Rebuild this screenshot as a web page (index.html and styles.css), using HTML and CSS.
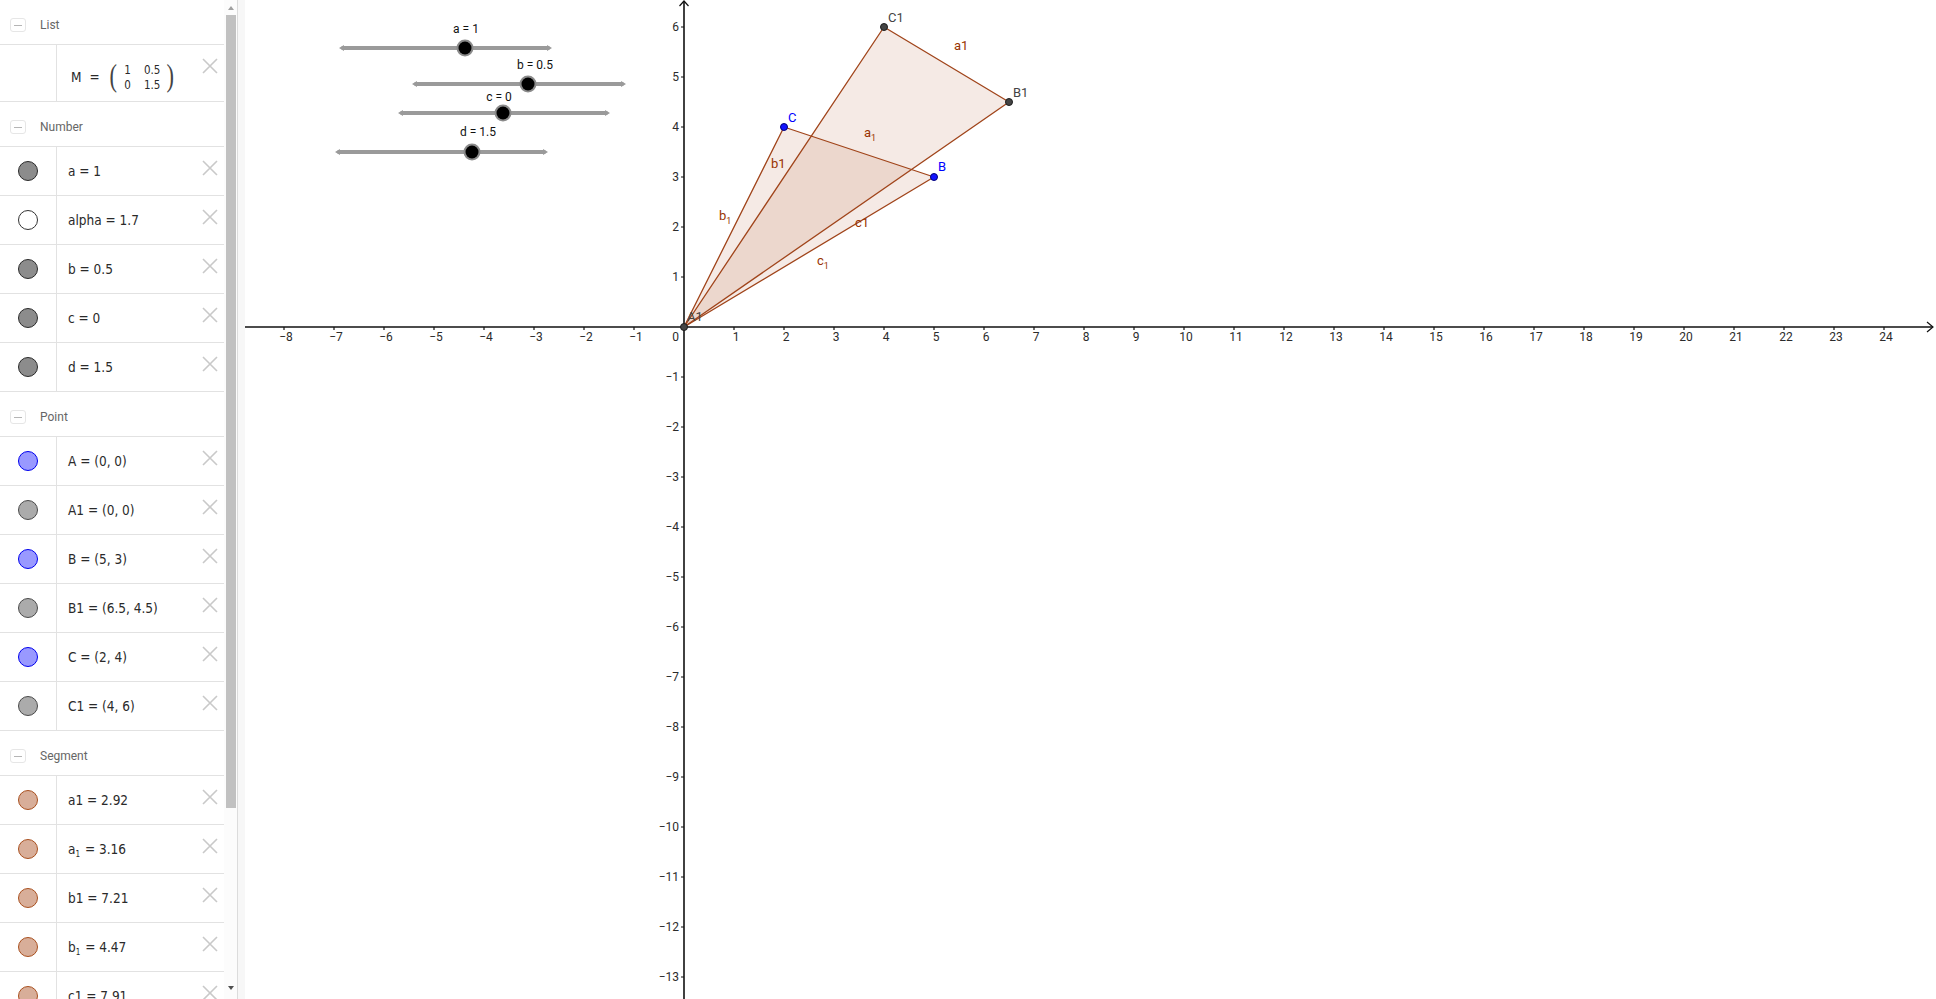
FILE: index.html
```html
<!DOCTYPE html>
<html>
<head>
<meta charset="utf-8">
<title>GeoGebra</title>
<link rel="stylesheet" href="styles.css">
</head>
<body>
<div class="app">
  <aside class="algebra">
    <div class="head"><span class="toggle"></span><span class="head-title">List</span></div>
    <div class="row row-matrix">
      <div class="marble-cell"></div>
      <div class="val matrix"><span class="mname">M</span><span class="eq">=</span><span class="paren">(</span><span class="mgrid"><span>1</span><span>0.5</span><span>0</span><span>1.5</span></span><span class="paren">)</span></div>
      <span class="del"><svg viewBox="0 0 16 16"><path d="M1 1L15 15M15 1L1 15"/></svg></span>
    </div>

    <div class="head"><span class="toggle"></span><span class="head-title">Number</span></div>
    <div class="row"><div class="marble-cell"><span class="marble num"></span></div><div class="val"><span class="txt">a = 1</span></div><span class="del"><svg viewBox="0 0 16 16"><path d="M1 1L15 15M15 1L1 15"/></svg></span></div>
    <div class="row"><div class="marble-cell"><span class="marble hollow"></span></div><div class="val"><span class="txt">alpha = 1.7</span></div><span class="del"><svg viewBox="0 0 16 16"><path d="M1 1L15 15M15 1L1 15"/></svg></span></div>
    <div class="row"><div class="marble-cell"><span class="marble num"></span></div><div class="val"><span class="txt">b = 0.5</span></div><span class="del"><svg viewBox="0 0 16 16"><path d="M1 1L15 15M15 1L1 15"/></svg></span></div>
    <div class="row"><div class="marble-cell"><span class="marble num"></span></div><div class="val"><span class="txt">c = 0</span></div><span class="del"><svg viewBox="0 0 16 16"><path d="M1 1L15 15M15 1L1 15"/></svg></span></div>
    <div class="row"><div class="marble-cell"><span class="marble num"></span></div><div class="val"><span class="txt">d = 1.5</span></div><span class="del"><svg viewBox="0 0 16 16"><path d="M1 1L15 15M15 1L1 15"/></svg></span></div>

    <div class="head"><span class="toggle"></span><span class="head-title">Point</span></div>
    <div class="row"><div class="marble-cell"><span class="marble blue"></span></div><div class="val"><span class="txt">A = (0, 0)</span></div><span class="del"><svg viewBox="0 0 16 16"><path d="M1 1L15 15M15 1L1 15"/></svg></span></div>
    <div class="row"><div class="marble-cell"><span class="marble gray"></span></div><div class="val"><span class="txt">A1 = (0, 0)</span></div><span class="del"><svg viewBox="0 0 16 16"><path d="M1 1L15 15M15 1L1 15"/></svg></span></div>
    <div class="row"><div class="marble-cell"><span class="marble blue"></span></div><div class="val"><span class="txt">B = (5, 3)</span></div><span class="del"><svg viewBox="0 0 16 16"><path d="M1 1L15 15M15 1L1 15"/></svg></span></div>
    <div class="row"><div class="marble-cell"><span class="marble gray"></span></div><div class="val"><span class="txt">B1 = (6.5, 4.5)</span></div><span class="del"><svg viewBox="0 0 16 16"><path d="M1 1L15 15M15 1L1 15"/></svg></span></div>
    <div class="row"><div class="marble-cell"><span class="marble blue"></span></div><div class="val"><span class="txt">C = (2, 4)</span></div><span class="del"><svg viewBox="0 0 16 16"><path d="M1 1L15 15M15 1L1 15"/></svg></span></div>
    <div class="row"><div class="marble-cell"><span class="marble gray"></span></div><div class="val"><span class="txt">C1 = (4, 6)</span></div><span class="del"><svg viewBox="0 0 16 16"><path d="M1 1L15 15M15 1L1 15"/></svg></span></div>

    <div class="head"><span class="toggle"></span><span class="head-title">Segment</span></div>
    <div class="row"><div class="marble-cell"><span class="marble seg"></span></div><div class="val"><span class="txt">a1 = 2.92</span></div><span class="del"><svg viewBox="0 0 16 16"><path d="M1 1L15 15M15 1L1 15"/></svg></span></div>
    <div class="row"><div class="marble-cell"><span class="marble seg"></span></div><div class="val"><span class="txt">a<sub>1</sub> = 3.16</span></div><span class="del"><svg viewBox="0 0 16 16"><path d="M1 1L15 15M15 1L1 15"/></svg></span></div>
    <div class="row"><div class="marble-cell"><span class="marble seg"></span></div><div class="val"><span class="txt">b1 = 7.21</span></div><span class="del"><svg viewBox="0 0 16 16"><path d="M1 1L15 15M15 1L1 15"/></svg></span></div>
    <div class="row"><div class="marble-cell"><span class="marble seg"></span></div><div class="val"><span class="txt">b<sub>1</sub> = 4.47</span></div><span class="del"><svg viewBox="0 0 16 16"><path d="M1 1L15 15M15 1L1 15"/></svg></span></div>
    <div class="row"><div class="marble-cell"><span class="marble seg"></span></div><div class="val"><span class="txt">c1 = 7.91</span></div><span class="del"><svg viewBox="0 0 16 16"><path d="M1 1L15 15M15 1L1 15"/></svg></span></div>
  </aside>

  <div class="scrollbar"><span class="arrow up"></span><span class="thumb"></span><span class="arrow down"></span></div>
  <div class="splitter"></div>

  <main class="graphics">
    <svg class="canvas" width="1691" height="999" viewBox="245 0 1691 999">
      <polygon class="poly" points="684,327 934,177 784,127"/>
      <polygon class="poly" points="684,327 1009,102 884,27"/>

      <line class="axis" x1="245" y1="327" x2="1933" y2="327"/>
      <line class="axis" x1="684" y1="1" x2="684" y2="999"/>
      <path class="arrowhead" d="M1927 322L1933 327L1927 332"/>
      <path class="arrowhead" d="M679.5 6L684 1L688.5 6"/>
      <path class="ticks" d="M284 327v3M334 327v3M384 327v3M434 327v3M484 327v3M534 327v3M584 327v3M634 327v3M734 327v3M784 327v3M834 327v3M884 327v3M934 327v3M984 327v3M1034 327v3M1084 327v3M1134 327v3M1184 327v3M1234 327v3M1284 327v3M1334 327v3M1384 327v3M1434 327v3M1484 327v3M1534 327v3M1584 327v3M1634 327v3M1684 327v3M1734 327v3M1784 327v3M1834 327v3M1884 327v3M681 27h3M681 77h3M681 127h3M681 177h3M681 227h3M681 277h3M681 377h3M681 427h3M681 477h3M681 527h3M681 577h3M681 627h3M681 677h3M681 727h3M681 777h3M681 827h3M681 877h3M681 927h3M681 977h3"/>

      <g class="xlabels">
        <text x="286" y="341">−8</text><text x="336" y="341">−7</text><text x="386" y="341">−6</text><text x="436" y="341">−5</text>
        <text x="486" y="341">−4</text><text x="536" y="341">−3</text><text x="586" y="341">−2</text><text x="636" y="341">−1</text>
        <text x="736" y="341">1</text><text x="786" y="341">2</text><text x="836" y="341">3</text><text x="886" y="341">4</text>
        <text x="936" y="341">5</text><text x="986" y="341">6</text><text x="1036" y="341">7</text><text x="1086" y="341">8</text>
        <text x="1136" y="341">9</text><text x="1186" y="341">10</text><text x="1236" y="341">11</text><text x="1286" y="341">12</text>
        <text x="1336" y="341">13</text><text x="1386" y="341">14</text><text x="1436" y="341">15</text><text x="1486" y="341">16</text>
        <text x="1536" y="341">17</text><text x="1586" y="341">18</text><text x="1636" y="341">19</text><text x="1686" y="341">20</text>
        <text x="1736" y="341">21</text><text x="1786" y="341">22</text><text x="1836" y="341">23</text><text x="1886" y="341">24</text>
      </g>
      <g class="ylabels">
        <text x="679" y="31">6</text><text x="679" y="81">5</text><text x="679" y="131">4</text><text x="679" y="181">3</text>
        <text x="679" y="231">2</text><text x="679" y="281">1</text><text x="679" y="341">0</text>
        <text x="679" y="381">−1</text><text x="679" y="431">−2</text><text x="679" y="481">−3</text><text x="679" y="531">−4</text>
        <text x="679" y="581">−5</text><text x="679" y="631">−6</text><text x="679" y="681">−7</text><text x="679" y="731">−8</text>
        <text x="679" y="781">−9</text><text x="679" y="831">−10</text><text x="679" y="881">−11</text><text x="679" y="931">−12</text>
        <text x="679" y="981">−13</text>
      </g>

      <polygon class="seg" points="684,327 934,177 784,127"/>
      <polygon class="seg" points="684,327 1009,102 884,27"/>

      <g class="seglabel">
        <text x="954" y="50">a1</text>
        <text x="864" y="137">a<tspan class="sub" dy="4">1</tspan></text>
        <text x="771" y="168">b1</text>
        <text x="719" y="220">b<tspan class="sub" dy="4">1</tspan></text>
        <text x="855" y="227">c1</text>
        <text x="817" y="265">c<tspan class="sub" dy="4">1</tspan></text>
      </g>

      <circle class="pt dark" cx="684" cy="327" r="3.5"/>
      <circle class="pt dark" cx="884" cy="27" r="3.5"/>
      <circle class="pt dark" cx="1009" cy="102" r="3.5"/>
      <circle class="pt bluept" cx="784" cy="127" r="3.5"/>
      <circle class="pt bluept" cx="934" cy="177" r="3.5"/>

      <g class="ptlabel">
        <text class="dk" x="888" y="22">C1</text>
        <text class="dk" x="1013" y="97">B1</text>
        <text class="dk" x="687" y="321">A1</text>
        <text class="bl" x="788" y="122">C</text>
        <text class="bl" x="938" y="171">B</text>
      </g>

      <g class="slider">
        <line x1="343" y1="48" x2="548" y2="48"/>
        <path class="tip" d="M339 48l5-3v6zM552 48l-5-3v6z"/>
        <circle class="halo" cx="465" cy="48" r="8.5"/><circle class="knob" cx="465" cy="48" r="6.5"/>
        <text x="466" y="33">a = 1</text>
      </g>
      <g class="slider">
        <line x1="416" y1="84" x2="622" y2="84"/>
        <path class="tip" d="M412 84l5-3v6zM626 84l-5-3v6z"/>
        <circle class="halo" cx="528" cy="84" r="8.5"/><circle class="knob" cx="528" cy="84" r="6.5"/>
        <text x="535" y="69">b = 0.5</text>
      </g>
      <g class="slider">
        <line x1="402" y1="113" x2="606" y2="113"/>
        <path class="tip" d="M398 113l5-3v6zM610 113l-5-3v6z"/>
        <circle class="halo" cx="503" cy="113" r="8.5"/><circle class="knob" cx="503" cy="113" r="6.5"/>
        <text x="499" y="101">c = 0</text>
      </g>
      <g class="slider">
        <line x1="339" y1="152" x2="544" y2="152"/>
        <path class="tip" d="M335 152l5-3v6zM548 152l-5-3v6z"/>
        <circle class="halo" cx="472" cy="152" r="8.5"/><circle class="knob" cx="472" cy="152" r="6.5"/>
        <text x="478" y="136">d = 1.5</text>
      </g>
    </svg>
  </main>
</div>
</body>
</html>
```

FILE: styles.css
```css
html, body {
  margin: 0;
  padding: 0;
  background: #fff;
  overflow: hidden;
}
body {
  font-family: Roboto, "Liberation Sans", sans-serif;
  color: #333;
}
.app {
  display: flex;
  width: 1936px;
  height: 999px;
}

/* Algebra view */
.algebra {
  width: 224px;
  flex: none;
  height: 999px;
  overflow: hidden;
  background: #fff;
}
.head {
  height: 45px;
  box-sizing: border-box;
  border-bottom: 1px solid #e2e2e2;
  padding: 6px 0 0 10px;
  display: flex;
  align-items: center;
  width: 224px;
}
.toggle {
  width: 16px;
  height: 14px;
  box-sizing: border-box;
  border: 1px solid #e6e6e6;
  border-radius: 3px;
  display: flex;
  align-items: center;
  justify-content: center;
}
.toggle::before {
  content: "";
  width: 8px;
  height: 1px;
  background: #b5b5b5;
}
.head-title {
  margin-left: 14px;
  font-family: Roboto, sans-serif;
  font-size: 12px;
  color: #666;
}
.row {
  height: 49px;
  box-sizing: border-box;
  border-bottom: 1px solid #e2e2e2;
  display: flex;
  width: 224px;
}
.row-matrix {
  height: 57px;
}
.marble-cell {
  width: 57px;
  flex: none;
  box-sizing: border-box;
  border-right: 1px solid #e2e2e2;
  display: flex;
  align-items: center;
  justify-content: center;
  padding-right: 1px;
}
.marble {
  width: 20px;
  height: 20px;
  box-sizing: border-box;
  border-radius: 50%;
  border: 1px solid #333;
}
.marble.num { background: #8c8c8c; border-color: #2a2a2a; }
.marble.hollow { background: #fff; border-color: #333; }
.marble.blue { background: #9999ff; border-color: #0000ee; }
.marble.gray { background: #ababab; border-color: #4a4a4a; }
.marble.seg { background: #d8ae99; border-color: #a9501f; }

.val {
  flex: 1;
  display: flex;
  align-items: center;
  padding-left: 11px;
  font-family: "DejaVu Sans Condensed", "DejaVu Sans", sans-serif;
  font-size: 13.5px;
  color: #2a2a2a;
  white-space: pre;
}
.txt {
  line-height: 18px;
}
.txt sub {
  font-size: 8px;
  vertical-align: -3px;
  line-height: 0;
  margin-right: 1px;
}
.matrix {
  padding-left: 14px;
  padding-top: 8px;
}
.mname { font-size: 13.5px; }
.eq { margin: 0 8px; }
.paren {
  font-family: "Liberation Serif", serif;
  font-size: 32px;
  line-height: 1;
  color: #444;
  transform: scaleX(0.7);
  display: inline-block;
  margin-top: -4px;
}
.mgrid {
  display: inline-grid;
  grid-template-columns: auto auto;
  column-gap: 13px;
  row-gap: 1px;
  font-size: 11.5px;
  line-height: 14px;
  margin: 0 5px 0 6px;
}
.del {
  flex: none;
  width: 16px;
  height: 16px;
  margin: 13px 6px 0 0;
}
.del svg {
  display: block;
  width: 16px;
  height: 16px;
  stroke: #c9c9c9;
  stroke-width: 1.6;
  fill: none;
}

/* Scrollbar */
.scrollbar {
  width: 13px;
  flex: none;
  height: 999px;
  box-sizing: border-box;
  padding-top: 6px;
  display: flex;
  flex-direction: column;
  align-items: center;
  background: #fcfcfc;
}
.arrow {
  width: 0;
  height: 0;
  border-left: 3px solid transparent;
  border-right: 3px solid transparent;
}
.arrow.up { border-bottom: 4px solid #a0a0a0; }
.arrow.down { border-top: 4px solid #505050; margin-top: auto; margin-bottom: 9px; }
.thumb {
  width: 10px;
  height: 793px;
  margin-top: 5px;
  margin-left: 1px;
  background: #c1c1c1;
}
.splitter {
  width: 8px;
  flex: none;
  height: 999px;
  box-sizing: border-box;
  border-left: 1px solid #dcdcdc;
  background: #f7f7f7;
}

/* Graphics view */
.graphics {
  flex: 1;
  height: 999px;
  overflow: hidden;
}
.canvas {
  display: block;
  font-family: Roboto, "Liberation Sans", sans-serif;
}
.poly {
  fill: rgba(153, 51, 0, 0.1);
  stroke: none;
}
.seg {
  fill: none;
  stroke: #a0441a;
  stroke-width: 1.3;
  stroke-linejoin: round;
}
.axis {
  stroke: #111;
  stroke-width: 1.6;
}
.arrowhead {
  fill: none;
  stroke: #111;
  stroke-width: 1.2;
}
.ticks {
  stroke: #111;
  stroke-width: 1.2;
}
.xlabels text {
  font-size: 12px;
  fill: #2b2b2b;
  text-anchor: middle;
}
.ylabels text {
  font-size: 12px;
  fill: #2b2b2b;
  text-anchor: end;
}
.seglabel text {
  font-size: 13px;
  fill: #993300;
}
.sub { font-size: 9px; }
.pt { stroke-width: 1; }
.pt.dark { fill: #444; stroke: #1c1c1c; }
.pt.bluept { fill: #1414ff; stroke: #00007a; }
.ptlabel text { font-size: 13px; }
.ptlabel .dk { fill: #444; }
.ptlabel .bl { fill: #0000ff; }
.slider line {
  stroke: #9a9a9a;
  stroke-width: 4;
  stroke-linecap: round;
}
.slider .tip { fill: #9a9a9a; }
.slider .halo { fill: #8a8a8a; }
.slider .knob { fill: #000; }
.slider text {
  font-size: 12px;
  fill: #111;
  text-anchor: middle;
}
```
